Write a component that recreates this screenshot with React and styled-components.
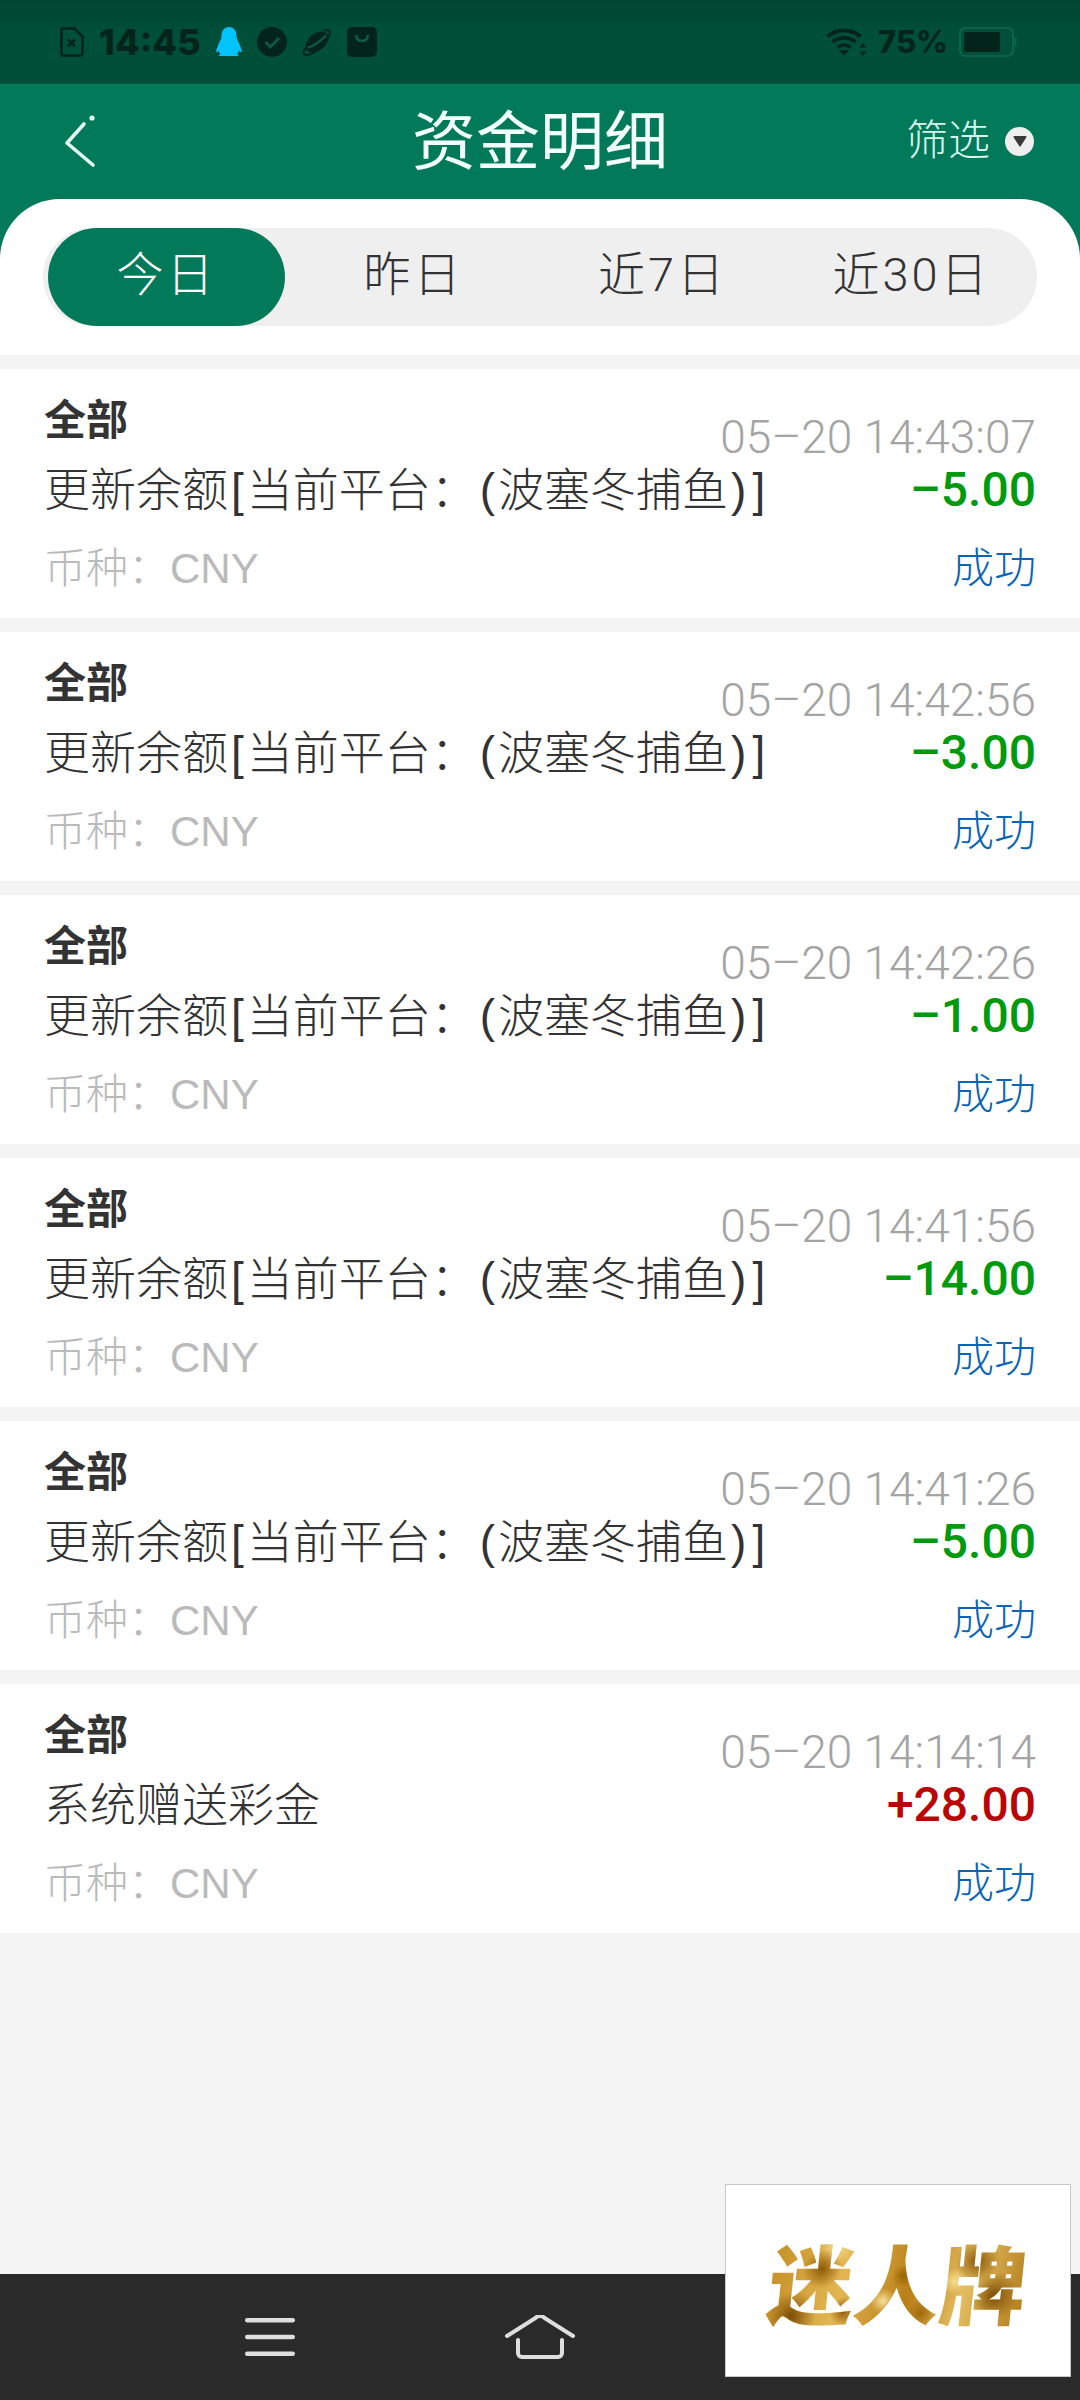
import React from "react";
import styled, { createGlobalStyle } from "styled-components";

const GlobalStyle = createGlobalStyle`
  html, body {
    margin: 0;
    padding: 0;
    background: #f4f4f4;
  }
  * {
    box-sizing: border-box;
  }
`;

const FONT = `"Liberation Sans", "Noto Sans CJK SC", sans-serif`;
const LIGHT_FONT = `Roboto, "Noto Sans CJK SC", sans-serif`;

const Page = styled.div`
  position: relative;
  display: flex;
  flex-direction: column;
  width: 1080px;
  height: 2400px;
  overflow: hidden;
  background: #f4f4f4;
  font-family: ${FONT};
`;

const StatusBar = styled.div`
  display: flex;
  align-items: center;
  justify-content: space-between;
  height: 84px;
  padding: 0 63px 0 60px;
  background: linear-gradient(#00452f, #005039 40%, #004e38);
  color: #03241b;
`;

const StatusGroup = styled.div`
  display: flex;
  align-items: center;
  gap: ${(props) => props.gap || 15}px;
`;

const StatusText = styled.span`
  font-family: Inter, sans-serif;
  font-size: ${(props) => props.size || 36}px;
  font-weight: 800;
  line-height: 30px;
`;

const Header = styled.header`
  background: #027a5a;
`;

const TopBar = styled.div`
  position: relative;
  display: flex;
  align-items: center;
  justify-content: center;
  height: 115px;
  color: #f2fffb;
`;

const BackButton = styled.button`
  position: absolute;
  left: 62px;
  top: 30px;
  display: flex;
  padding: 0;
  border: 0;
  background: transparent;
`;

const Title = styled.h1`
  margin: 0;
  font-size: 64px;
  font-weight: 400;
  line-height: 80px;
`;

const FilterButton = styled.button`
  position: absolute;
  right: 46px;
  top: 42px;
  display: flex;
  align-items: center;
  gap: 15px;
  padding: 0;
  border: 0;
  background: transparent;
  color: #d9f5ec;
  font-family: ${FONT};
  font-size: 42px;
  font-weight: 300;
  line-height: 30px;
`;

const FilterDot = styled.span`
  display: flex;
  align-items: center;
  justify-content: center;
  width: 29px;
  height: 29px;
  border-radius: 50%;
  background: #eeeeee;
`;

const TabsPanel = styled.div`
  height: 156px;
  padding: 29px 43px 0;
  border-radius: 60px 60px 0 0;
  background: #ffffff;
`;

const Tabs = styled.div`
  display: flex;
  align-items: center;
  height: 98px;
  padding-left: 5px;
  border-radius: 49px;
  background: #efefef;
`;

const Tab = styled.div`
  flex: 0 0 ${(props) => (props.active ? 237 : 249)}px;
  height: 98px;
  padding-left: ${(props) => (props.active ? 0 : 8)}px;
  border-radius: 49px;
  background: ${(props) => (props.active ? "#027a5a" : "transparent")};
  color: ${(props) => (props.active ? "#ffffff" : "#333333")};
  font-family: ${LIGHT_FONT};
  font-size: 47px;
  font-weight: 300;
  letter-spacing: 3px;
  line-height: 94px;
  text-align: center;
`;

const List = styled.div`
  display: flex;
  flex-direction: column;
  flex: 1;
  gap: 14px;
  padding-top: 14px;
`;

const Card = styled.article`
  height: 249px;
  padding: 22px 44px 0;
  background: #ffffff;
`;

const Row = styled.div`
  display: flex;
  justify-content: space-between;
  align-items: center;
  height: ${(props) => props.height || 60}px;
  margin-top: ${(props) => props.top || 0}px;
`;

const HeadRow = styled(Row)`
  align-items: flex-start;
  height: 69px;
`;

const Kind = styled.span`
  color: #333333;
  font-size: 42px;
  font-weight: 700;
  line-height: 60px;
`;

const Time = styled.span`
  align-self: flex-end;
  margin-bottom: 2px;
  color: #a4a4a4;
  font-family: ${LIGHT_FONT};
  font-size: 46px;
  font-weight: 300;
  line-height: 42px;
`;

const Desc = styled.span`
  color: #333333;
  font-size: 46px;
  font-weight: 300;
  line-height: 60px;
  white-space: nowrap;
`;

const Mark = styled.span`
  padding: 0 3px;
`;

const Amount = styled.span`
  color: ${(props) => (props.income ? "#bb0505" : "#009a0e")};
  font-family: ${LIGHT_FONT};
  font-size: 48px;
  font-weight: 500;
  line-height: 60px;
`;

const Currency = styled.span`
  color: #bababa;
  font-size: 42px;
  font-weight: 300;
  line-height: 60px;
`;

const Status = styled.span`
  color: #0b64b4;
  font-size: 42px;
  font-weight: 300;
  line-height: 60px;
`;

const BottomNav = styled.nav`
  display: flex;
  align-items: center;
  justify-content: center;
  gap: 200px;
  height: 126px;
  background: #2a2a2a;
`;

const NavIcon = styled.span`
  display: flex;
  justify-content: center;
  width: 70px;
`;

const AdBox = styled.div`
  position: absolute;
  left: 725px;
  top: 2184px;
  display: flex;
  align-items: center;
  justify-content: center;
  width: 346px;
  height: 193px;
  border: 1px solid #c8c8c8;
  background: #ffffff;
`;

const AdText = styled.span`
  display: block;
  transform: skewX(-6deg);
  background:
    radial-gradient(circle at 10% 85%, #7d4d05 0, transparent 10%),
    radial-gradient(circle at 20% 38%, #8f5a08 0, transparent 9%),
    radial-gradient(circle at 30% 80%, #8f5a08 0, transparent 7%),
    radial-gradient(circle at 52% 45%, #9a6408 0, transparent 8%),
    radial-gradient(circle at 60% 82%, #a06a0c 0, transparent 8%),
    radial-gradient(circle at 80% 30%, #8a5607 0, transparent 10%),
    radial-gradient(circle at 88% 65%, #7d4d05 0, transparent 10%),
    radial-gradient(circle at 25% 15%, #f6dc8e 0, transparent 9%),
    radial-gradient(circle at 45% 70%, #f8e09a 0, transparent 8%),
    radial-gradient(circle at 72% 50%, #f6dc8e 0, transparent 7%),
    linear-gradient(100deg, #c48e24, #e2b652 30%, #b97f18 55%, #e3bd60 75%, #b07a1a);
  background-clip: text;
  -webkit-background-clip: text;
  color: transparent;
  font-family: "Noto Sans CJK SC", sans-serif;
  font-size: 86px;
  font-weight: 900;
  line-height: 100px;
  white-space: nowrap;
`;

const FileIcon = () => (
  <svg width="24" height="30" viewBox="0 0 24 30" fill="none">
    <path d="M2.500 1.500h12l8 8v17a2 2 0 0 1-2 2h-18a1 1 0 0 1-1-1v-25a1 1 0 0 1 1-1z" stroke="#03241b" strokeWidth="2.600" />
    <path d="M8 12.500l7 7M15 12.500l-7 7" stroke="#03241b" strokeWidth="2.800" />
  </svg>
);

const PenguinIcon = () => (
  <svg width="26" height="30" viewBox="0 0 26 30">
    <path
      d="M13 0c5 0 7.500 4 7.500 9 0 2 .5 3 1.500 5 1.500 3 3.500 8 4 11-1.200 0-2.300-.5-3-1.500-.4 1.500-1 2.500-2 3.500 1 .5 1.500 1 1.500 2H3c0-1 .5-1.500 1.500-2-1-1-1.600-2-2-3.500C1.800 24.500 1.200 25 0 25c.5-3 2.500-8 4-11 1-2 1.500-3 1.500-5C5.500 4 8 0 13 0z"
      fill="#00c3ff"
    />
  </svg>
);

const CheckIcon = () => (
  <svg width="30" height="30" viewBox="0 0 30 30">
    <circle cx="15" cy="15" r="15" fill="#03241b" />
    <path d="M8.500 15l5 5 8.500-9" fill="none" stroke="#0d5a45" strokeWidth="2.600" />
  </svg>
);

const PlanetIcon = () => (
  <svg width="30" height="30" viewBox="0 0 30 30" fill="none">
    <ellipse cx="15" cy="15" rx="13" ry="8.500" transform="rotate(-40 15 15)" fill="#03241b" />
    <path d="M5.500 20.500C10 20 19 14 24 8.500" stroke="#0d5a45" strokeWidth="2.200" />
    <path d="M5 20c-5 5-4 8 0 8 4 0 13-5 18-12 5-7 7-13 2-13-1 0-2 .3-3 .7" stroke="#03241b" strokeWidth="1.800" />
  </svg>
);

const BagIcon = () => (
  <svg width="30" height="30" viewBox="0 0 30 30">
    <rect width="30" height="30" rx="5" fill="#03241b" />
    <path d="M9 8c.5 4 3 6 6 6s5.500-2 6-6" fill="none" stroke="#0d5a45" strokeWidth="2.600" />
  </svg>
);

const WifiIcon = () => (
  <svg width="41" height="28" viewBox="0 0 41 28" fill="none">
    <path d="M1.500 8.500C11 .5 25 .5 34.500 8.500" stroke="#03241b" strokeWidth="3.800" />
    <path d="M6.500 14C13 8.500 23 8.500 29.500 14" stroke="#03241b" strokeWidth="3.800" />
    <path d="M11.500 19.500c4-3.200 9-3.200 13 0" stroke="#03241b" strokeWidth="3.800" />
    <path d="M13 22h10l-5 6z" fill="#03241b" />
    <path d="M37 15l3.500 4.500h-7zM37 28l-3.500-4.500h7z" fill="#03241b" />
  </svg>
);

const BatteryIcon = () => (
  <svg width="58" height="30" viewBox="0 0 58 30" fill="none">
    <rect x="1" y="1" width="53" height="28" rx="5" stroke="#0e6a52" strokeWidth="1.600" />
    <rect x="5" y="5" width="36" height="20" rx="2" fill="#03241b" />
    <path d="M56.500 11v8" stroke="#0e6a52" strokeWidth="1.600" />
  </svg>
);

const BackIcon = () => (
  <svg width="36" height="54" viewBox="0 0 36 54" fill="none">
    <path d="M22 10L5 29 31 51" stroke="#e4faf3" strokeWidth="3.600" strokeLinecap="round" strokeLinejoin="round" />
    <circle cx="30" cy="4" r="2.600" fill="#e4faf3" />
  </svg>
);

const CaretIcon = () => (
  <svg width="14" height="12" viewBox="0 0 14 12">
    <path d="M1.500 1h11a1 1 0 0 1 .8 1.500L7.800 11a1 1 0 0 1-1.600 0L.7 2.500A1 1 0 0 1 1.500 1z" fill="#3a3a3a" />
  </svg>
);

const MenuIcon = () => (
  <svg width="50" height="38" viewBox="0 0 50 38">
    <rect width="50" height="4.500" y="0" rx="2.200" fill="#dedede" />
    <rect width="50" height="4.500" y="16.800" rx="2.200" fill="#dedede" />
    <rect width="50" height="4.500" y="33.500" rx="2.200" fill="#dedede" />
  </svg>
);

const HomeIcon = () => (
  <svg width="70" height="44" viewBox="0 0 70 44" fill="none">
    <path d="M2 21L30.500 3a6 6 0 0 1 9 0L68 21" stroke="#dedede" strokeWidth="4" strokeLinecap="round" />
    <path d="M13 25v13a4 4 0 0 0 4 4h36a4 4 0 0 0 4-4V25" stroke="#dedede" strokeWidth="4" strokeLinecap="round" />
  </svg>
);

const ReturnIcon = () => (
  <svg width="40" height="44" viewBox="0 0 40 44" fill="none">
    <path d="M30 4L8 22l22 18" stroke="#dedede" strokeWidth="3.400" strokeLinecap="round" />
  </svg>
);

const TABS = ["今日", "昨日", "近7日", "近30日"];

const UPDATE = (
  <>
    更新余额<Mark>[</Mark>当前平台：<Mark>(</Mark>波塞冬捕鱼<Mark>)</Mark><Mark>]</Mark>
  </>
);

const RECORDS = [
  { time: "05–20 14:43:07", desc: UPDATE, amount: "–5.00" },
  { time: "05–20 14:42:56", desc: UPDATE, amount: "–3.00" },
  { time: "05–20 14:42:26", desc: UPDATE, amount: "–1.00" },
  { time: "05–20 14:41:56", desc: UPDATE, amount: "–14.00" },
  { time: "05–20 14:41:26", desc: UPDATE, amount: "–5.00" },
  { time: "05–20 14:14:14", desc: "系统赠送彩金", amount: "+28.00", income: true },
];

const App = () => {
  return (
    <Page>
      <GlobalStyle />
      <StatusBar>
        <StatusGroup>
          <FileIcon />
          <StatusText>14:45</StatusText>
          <PenguinIcon />
          <CheckIcon />
          <PlanetIcon />
          <BagIcon />
        </StatusGroup>
        <StatusGroup gap={11}>
          <WifiIcon />
          <StatusText size={31}>75%</StatusText>
          <BatteryIcon />
        </StatusGroup>
      </StatusBar>
      <Header>
        <TopBar>
          <BackButton>
            <BackIcon />
          </BackButton>
          <Title>资金明细</Title>
          <FilterButton>
            筛选
            <FilterDot>
              <CaretIcon />
            </FilterDot>
          </FilterButton>
        </TopBar>
        <TabsPanel>
          <Tabs>
            {TABS.map((tab, i) => (
              <Tab key={tab} active={i === 0}>
                {tab}
              </Tab>
            ))}
          </Tabs>
        </TabsPanel>
      </Header>
      <List>
        {RECORDS.map((record) => (
          <Card key={record.time}>
            <HeadRow>
              <Kind>全部</Kind>
              <Time>{record.time}</Time>
            </HeadRow>
            <Row>
              <Desc>{record.desc}</Desc>
              <Amount income={record.income}>{record.amount}</Amount>
            </Row>
            <Row top={19}>
              <Currency>币种：CNY</Currency>
              <Status>成功</Status>
            </Row>
          </Card>
        ))}
      </List>
      <BottomNav>
        <NavIcon>
          <MenuIcon />
        </NavIcon>
        <NavIcon>
          <HomeIcon />
        </NavIcon>
        <NavIcon>
          <ReturnIcon />
        </NavIcon>
      </BottomNav>
      <AdBox>
        <AdText>迷人牌</AdText>
      </AdBox>
    </Page>
  );
};

export default App;
